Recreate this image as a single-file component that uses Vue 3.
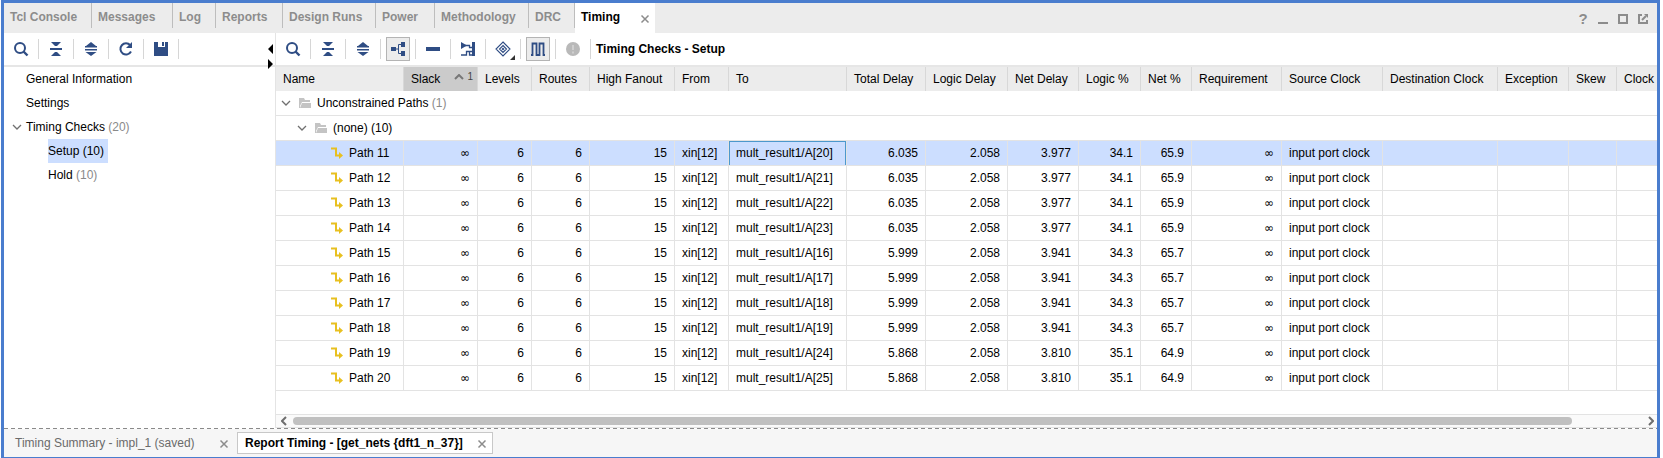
<script setup>
import { ref } from 'vue'

const tabs = ['Tcl Console', 'Messages', 'Log', 'Reports', 'Design Runs', 'Power', 'Methodology', 'DRC', 'Timing']
const activeTab = ref('Timing')

const icons = {
  search: '<circle cx="7" cy="7" r="5" fill="none" stroke="currentColor" stroke-width="2"/><path d="M10.5 10.5l4 4" stroke="currentColor" stroke-width="2.4"/>',
  collapse: '<path fill="currentColor" d="M3 1h10L9 5H7zM2 7h12v2H2zM7 11h2l4 4H3z"/>',
  expand: '<path fill="currentColor" d="M8 1l5 4H3zM2 5h12v1.500H2zM2 8h12v1.500H2zM2.500 11h11l-5.500 4z"/>',
  refresh: '<path d="M12.2 4.2A5.6 5.6 0 1 0 13 10.5" fill="none" stroke="currentColor" stroke-width="2"/><path d="M14 1v6H8z" fill="currentColor"/>',
  save: '<path fill="currentColor" d="M1 1h4v5h7V1h3v14H1zM9 1h2v4H9z"/>',
  tree: '<path d="M6 8h3M12 3.500H8.500v9H12" fill="none" stroke="currentColor"/><path fill="currentColor" d="M1 6h5v4H1zM11 1h4v5h-4zM11 10h4v5h-4z"/>',
  minus: '<path fill="currentColor" d="M1 6h14v4H1z"/>',
  schematic: '<path fill="currentColor" d="M1 1l6 3.500L1 8zM12 1h3v14h-3z"/><path d="M5 4.500h4.500v2H13M1 14h5.500v-3.500H12M9.500 10v4H13" fill="none" stroke="currentColor" stroke-width="1.300"/>',
  diamond: '<path d="M8 1l7 7-7 7-7-7zM8 4.5L11.500 8 8 11.500 4.500 8z" fill="none" stroke="currentColor" stroke-width="1.1"/><path d="M8 6.500L9.500 8 8 9.500 6.500 8z" fill="currentColor"/>',
  wave: '<path d="M1 14h1.500V2.500h4V14h3V2.500h4V14H15" fill="none" stroke="currentColor" stroke-width="1.800"/>',
  alert: '<circle cx="8" cy="8" r="7" fill="#b9b9b9"/><path d="M8 4v5M8 10.500v2" stroke="#cfcfcf" stroke-width="2"/>'
}

const leftTools = [
  { icon: 'search', label: 'Search' },
  { icon: 'collapse', label: 'Collapse All' },
  { icon: 'expand', label: 'Expand All' },
  { icon: 'refresh', label: 'Refresh' },
  { icon: 'save', label: 'Save' }
]
const rightTools = [
  { icon: 'search', label: 'Search' },
  { icon: 'collapse', label: 'Collapse All' },
  { icon: 'expand', label: 'Expand All' },
  { icon: 'tree', label: 'Group by', on: true },
  { icon: 'minus', label: 'Remove' },
  { icon: 'schematic', label: 'Schematic' },
  { icon: 'diamond', label: 'Mark', menu: true },
  { icon: 'wave', label: 'Show Nets', on: true },
  { icon: 'alert', label: 'Messages', off: true }
]

const columns = [
  { name: 'Name', cls: 'w-name' },
  { name: 'Slack', cls: 'w-slack' },
  { name: 'Levels', cls: 'w-levels' },
  { name: 'Routes', cls: 'w-routes' },
  { name: 'High Fanout', cls: 'w-fanout' },
  { name: 'From', cls: 'w-from' },
  { name: 'To', cls: 'w-to' },
  { name: 'Total Delay', cls: 'w-total' },
  { name: 'Logic Delay', cls: 'w-logic' },
  { name: 'Net Delay', cls: 'w-net' },
  { name: 'Logic %', cls: 'w-logicp' },
  { name: 'Net %', cls: 'w-netp' },
  { name: 'Requirement', cls: 'w-req' },
  { name: 'Source Clock', cls: 'w-src' },
  { name: 'Destination Clock', cls: 'w-dst' },
  { name: 'Exception', cls: 'w-exc' },
  { name: 'Skew', cls: 'w-skew' },
  { name: 'Clock', cls: 'w-clock' }
]

const rows = [
  [11, 20, '6.035', '3.977', '34.1', '65.9'],
  [12, 21, '6.035', '3.977', '34.1', '65.9'],
  [13, 22, '6.035', '3.977', '34.1', '65.9'],
  [14, 23, '6.035', '3.977', '34.1', '65.9'],
  [15, 16, '5.999', '3.941', '34.3', '65.7'],
  [16, 17, '5.999', '3.941', '34.3', '65.7'],
  [17, 18, '5.999', '3.941', '34.3', '65.7'],
  [18, 19, '5.999', '3.941', '34.3', '65.7'],
  [19, 24, '5.868', '3.810', '35.1', '64.9'],
  [20, 25, '5.868', '3.810', '35.1', '64.9']
].map(([id, bit, total, net, logicPct, netPct]) => ({ id, bit, total, net, logicPct, netPct }))
const selected = ref(11)
</script>

<template>
  <main class="window">
    <header class="tabbar">
      <nav class="tabs" role="tablist">
        <button v-for="t in tabs" :key="t" class="tab" :class="{ active: t === activeTab }" role="tab" :aria-selected="t === activeTab">
          <span>{{ t }}</span>
          <svg v-if="t === activeTab" class="close" viewBox="0 0 10 10"><path d="M1.500 1.500l7 7M8.500 1.500l-7 7" /></svg>
        </button>
      </nav>
      <div class="winctl">
        <button aria-label="Help" class="help">?</button>
        <button aria-label="Minimize"><svg viewBox="0 0 12 12"><path d="M1 10h10" /></svg></button>
        <button aria-label="Maximize"><svg viewBox="0 0 12 12"><path d="M2 2h8v8H2z" /></svg></button>
        <button aria-label="Float"><svg viewBox="0 0 12 12"><path d="M5 2H2v8h8V7M5 7l4-4" /><path class="solid" d="M7 1h4v4z" /></svg></button>
      </div>
    </header>

    <div class="body">
      <aside class="side">
        <div class="toolbar">
          <div v-for="b in leftTools" :key="b.icon" class="cell">
            <button class="tool" :aria-label="b.label"><svg viewBox="0 0 16 16" v-html="icons[b.icon]"></svg></button>
          </div>
        </div>
        <svg class="splitter" viewBox="0 0 6 26"><path d="M6 1v10L1 6zM1 16v10l5-5z" /></svg>
        <ul class="tree">
          <li class="l1"><a href="#">General Information</a></li>
          <li class="l1"><a href="#">Settings</a></li>
          <li class="l1">
            <svg class="chev" viewBox="0 0 10 6"><path d="M1 1l4 4 4-4" /></svg>
            <a href="#">Timing Checks <i>(20)</i></a>
          </li>
          <li class="l2"><a href="#" class="sel">Setup (10)</a></li>
          <li class="l2"><a href="#">Hold <i>(10)</i></a></li>
        </ul>
      </aside>

      <section class="main">
        <div class="toolbar">
          <div v-for="b in rightTools" :key="b.icon" class="cell">
            <button class="tool" :class="{ on: b.on }" :disabled="b.off" :aria-label="b.label">
              <svg viewBox="0 0 16 16" v-html="icons[b.icon]"></svg>
              <svg v-if="b.menu" class="menu-mark" viewBox="0 0 5 5"><path d="M5 0v5H0z" /></svg>
            </button>
          </div>
          <h1>Timing Checks - Setup</h1>
        </div>

        <div class="grid">
          <table>
            <colgroup><col v-for="c in columns" :key="c.name" :class="c.cls"></colgroup>
            <thead>
              <tr>
                <th v-for="c in columns" :key="c.name" :class="{ sorted: c.name === 'Slack' }">
                  <span v-if="c.name === 'Slack'" class="sortrow">
                    <span>Slack</span>
                    <span class="sort"><svg viewBox="0 0 10 6"><path d="M1 5l4-4 4 4" /></svg><small>1</small></span>
                  </span>
                  <template v-else>{{ c.name }}</template>
                </th>
              </tr>
            </thead>
            <tbody>
              <tr class="group">
                <td :colspan="columns.length"><div class="node">
                  <svg class="chev" viewBox="0 0 10 6"><path d="M1 1l4 4 4-4" /></svg>
                  <svg class="folder" viewBox="0 0 12 10"><path d="M0 0h5l1 2h5v2H3L1 8v2H0zM3 5h9v5H1z" /></svg>
                  <span>Unconstrained Paths <i>(1)</i></span>
                </div></td>
              </tr>
              <tr class="group">
                <td :colspan="columns.length"><div class="node deep">
                  <svg class="chev" viewBox="0 0 10 6"><path d="M1 1l4 4 4-4" /></svg>
                  <svg class="folder" viewBox="0 0 12 10"><path d="M0 0h5l1 2h5v2H3L1 8v2H0zM3 5h9v5H1z" /></svg>
                  <span>(none) (10)</span>
                </div></td>
              </tr>
              <tr v-for="r in rows" :key="r.id" :class="{ selected: r.id === selected }" @click="selected = r.id">
                <td><div class="path">
                  <svg viewBox="0 0 12 12"><path d="M0 1.500h5v7h4" /><path class="solid" d="M8 5l4 3.500L8 12z" /></svg>
                  <span>Path {{ r.id }}</span>
                </div></td>
                <td class="num inf">∞</td>
                <td class="num">6</td>
                <td class="num">6</td>
                <td class="num">15</td>
                <td>xin[12]</td>
                <td class="to">mult_result1/A[{{ r.bit }}]</td>
                <td class="num">{{ r.total }}</td>
                <td class="num">2.058</td>
                <td class="num">{{ r.net }}</td>
                <td class="num">{{ r.logicPct }}</td>
                <td class="num">{{ r.netPct }}</td>
                <td class="num inf">∞</td>
                <td>input port clock</td>
                <td></td><td></td><td></td><td></td>
              </tr>
            </tbody>
          </table>
        </div>

        <div class="scroll">
          <svg viewBox="0 0 6 10"><path d="M5 1L1 5l4 4" /></svg>
          <div class="track"><div class="thumb"></div></div>
          <svg viewBox="0 0 6 10"><path d="M1 1l4 4-4 4" /></svg>
        </div>
      </section>
    </div>

    <footer class="results">
      <button class="result">
        <span>Timing Summary - impl_1 (saved)</span>
        <svg class="close" viewBox="0 0 10 10"><path d="M1.500 1.500l7 7M8.500 1.500l-7 7" /></svg>
      </button>
      <button class="result current">
        <span>Report Timing - [get_nets {dft1_n_37}]</span>
        <svg class="close" viewBox="0 0 10 10"><path d="M1.500 1.500l7 7M8.500 1.500l-7 7" /></svg>
      </button>
    </footer>
  </main>
</template>

<style>
body { margin: 0; background: #fff; }
</style>

<style scoped>
* { box-sizing: border-box; }
.window {
  display: flex;
  flex-direction: column;
  min-height: 100vh;
  margin: 0 3px 0 1px;
  border: 3px solid #4a7dce;
  border-bottom-width: 1px;
  background: #fff;
  color: #000;
  font: 12px/16px "Liberation Sans", Arial, sans-serif;
  overflow: hidden;
}
button { margin: 0; padding: 0; border: 0; background: none; font: inherit; color: inherit; }
svg { display: block; flex: none; }
i { font-style: normal; color: #8a8a8a; }
.close { width: 10px; height: 10px; fill: none; stroke: #8c8c8c; stroke-width: 1.5; }

.tabbar { display: flex; justify-content: space-between; height: 30px; background: #ececec; }
.tabs { display: grid; grid-template-columns: 88px 81px 43px 67px 93px 59px 94px 46px 80px; align-items: start; }
.tab {
  display: flex;
  align-items: center;
  height: 25px;
  padding: 3px 0 0 6px;
  border-right: 1px solid #bdbdbd;
  color: #8c8c8c;
  font-weight: bold;
  white-space: nowrap;
}
.tab.active { justify-content: space-between; height: 30px; padding: 0 5px 0 6px; border: 0; background: #fff; color: #000; }
.tab.active span { padding-bottom: 2px; }
.tab .close { margin-top: 2px; }
.winctl { display: flex; align-items: center; gap: 8px; padding: 2px 8px 0 0; color: #8c8c8c; }
.winctl button { width: 12px; }
.winctl svg { width: 12px; height: 12px; fill: none; stroke: #8c8c8c; stroke-width: 2; }
.winctl .solid { fill: #8c8c8c; stroke: none; }
.winctl .help { font-size: 15px; font-weight: bold; }

.body { display: flex; flex: 1; min-height: 0; }
.side { position: relative; flex: none; width: 272px; border-right: 1px solid #e4e4e4; }
.main { display: flex; flex-direction: column; flex: 1; min-width: 0; }
.toolbar { display: flex; align-items: center; height: 34px; border-bottom: 2px solid #e6e6e6; }
.cell { display: flex; align-items: center; justify-content: center; width: 35px; height: 20px; border-right: 1px solid #d6d6d6; }
.tool { position: relative; display: flex; flex: none; align-items: center; justify-content: center; width: 24px; height: 24px; color: #2f4d84; }
.tool svg { width: 16px; height: 16px; }
.tool.on { border: 1px solid #b4b4b4; background: #ececec; }
.tool .menu-mark { position: absolute; right: 0; bottom: 1px; width: 5px; height: 5px; fill: #333; }
.toolbar h1 { margin: 0 0 0 5px; font-size: 12px; line-height: 16px; }
.splitter { position: absolute; top: 10px; right: 2px; width: 6px; height: 26px; }

.tree { margin: 0; padding: 0; list-style: none; }
.tree li { display: flex; align-items: center; height: 24px; }
.tree a { color: inherit; text-decoration: none; line-height: 24px; }
.tree .l1 { padding-left: 22px; }
.tree .l2 { padding-left: 44px; }
.tree .sel { background: #ccdeff; padding-right: 4px; }
.chev { width: 10px; height: 6px; fill: none; stroke: #707070; stroke-width: 1.3; }
.tree .chev { margin: 0 4px 0 -14px; }

.grid { flex: 1; overflow: hidden; }
table { width: 100%; table-layout: fixed; border-collapse: separate; border-spacing: 0; }
th, td { overflow: hidden; padding: 0 7px; white-space: nowrap; text-align: left; }
th { height: 24px; background: #ececec; border-right: 1px solid #d8d8d8; font-weight: normal; }
th:last-child { border-right: 0; padding-right: 0; }
th.sorted { background: #cbcbcb; padding-right: 4px; }
td { height: 25px; border-right: 1px solid #e3e3e3; border-bottom: 1px solid #e3e3e3; }
td:last-child { border-right: 0; }
.num { text-align: right; }
.inf { font-family: "DejaVu Sans", sans-serif; }
.selected td { background: #ccdeff; }
.selected .to { box-shadow: inset 1px 1px #4c98cc, inset -1px 0 #4c98cc; }
.sortrow, .sort, .node, .path { display: flex; align-items: center; }
.sortrow { justify-content: space-between; }
.sort { gap: 3px; padding-bottom: 5px; }
.sort svg { width: 10px; height: 6px; fill: none; stroke: #777; stroke-width: 2; }
.sort small { color: #444; font-size: 10px; line-height: 11px; }
.node { gap: 6px; margin-left: -2px; }
.node .chev { margin-right: 2px; }
.node.deep { padding-left: 16px; }
.folder { width: 12px; height: 10px; fill: #c4c4c4; }
.path { gap: 6px; padding-left: 48px; }
.path svg { width: 12px; height: 12px; fill: none; stroke: #e8c020; stroke-width: 2; }
.path .solid { fill: #e8c020; stroke: none; }
.w-name { width: 128px; }
.w-slack { width: 74px; }
.w-levels, .w-from { width: 54px; }
.w-routes { width: 58px; }
.w-fanout { width: 85px; }
.w-to { width: 118px; }
.w-total { width: 79px; }
.w-logic { width: 82px; }
.w-net, .w-exc { width: 71px; }
.w-logicp { width: 62px; }
.w-netp { width: 51px; }
.w-req { width: 90px; }
.w-src { width: 101px; }
.w-dst { width: 115px; }
.w-skew { width: 48px; }

.scroll { display: flex; align-items: center; gap: 6px; height: 14px; padding: 0 3px 0 5px; border-top: 1px solid #e3e3e3; border-bottom: 1px solid #e3e3e3; background: #fafafa; }
.scroll svg { width: 6px; height: 10px; fill: none; stroke: #6e6e6e; stroke-width: 2; }
.track { flex: 1; }
.thumb { width: 94.8%; height: 8px; border-radius: 4px; background: #c0c0c0; }

.results {
  display: flex;
  align-items: flex-start;
  height: 29px;
  padding-top: 4px;
  background: repeating-linear-gradient(90deg, #8a8a8a 0 4px, #fff 4px 7px) 0 0 / 100% 1px no-repeat #f6f6f6;
}
.result { display: flex; align-items: center; justify-content: space-between; width: 233px; height: 22px; padding: 0 8px 0 11px; color: #6a6a6a; white-space: nowrap; }
.result .close { margin-top: 2px; }
.result.current { width: 256px; padding: 0 5px 0 7px; border: 1px solid #c8c8c8; background: #fff; color: #000; font-weight: bold; }
</style>
